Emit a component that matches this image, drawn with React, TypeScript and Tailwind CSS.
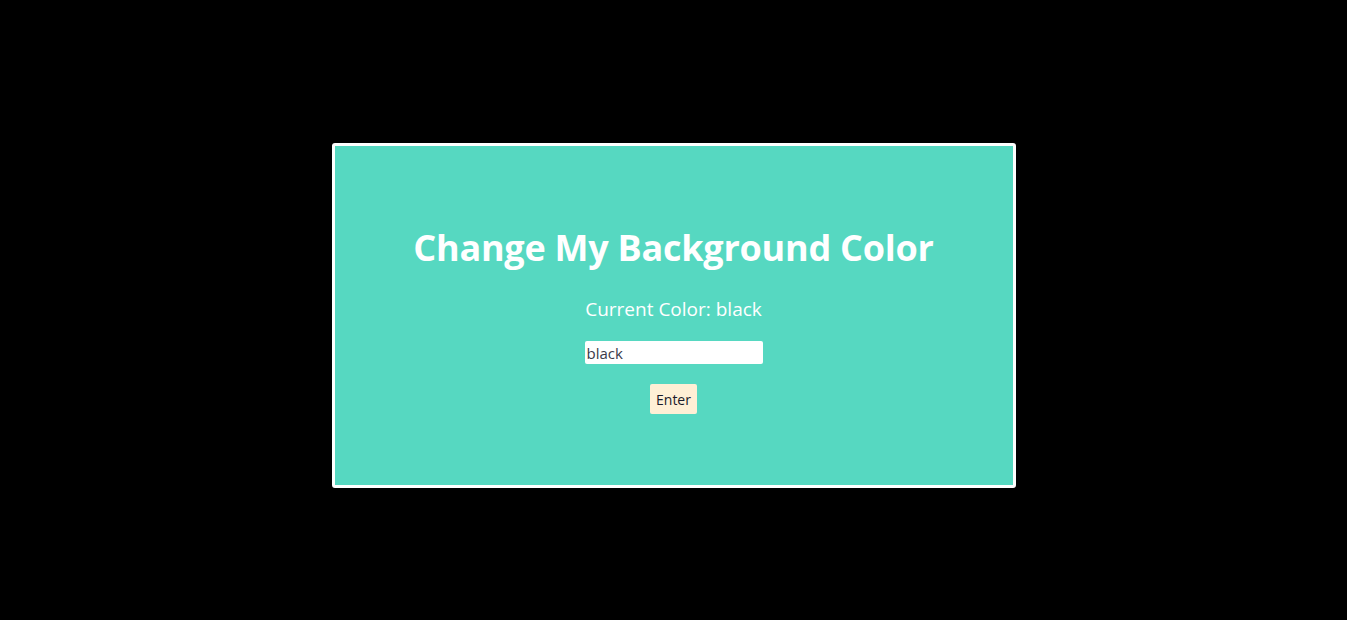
import { useState } from "react";

export default function App() {
  const [color, setColor] = useState("black");
  const [value, setValue] = useState("black");

  return (
    <div
      className="flex h-[620px] w-full items-center justify-center pt-[11px]"
      style={{ backgroundColor: color }}
    >
      <div className="flex h-[345px] w-[684px] flex-col items-center rounded-[3px] border-[3px] border-white bg-[#56d8c1] pt-[76px] font-['Open_Sans',sans-serif] text-white">
        <h1 className="text-[36px] leading-[52px] font-bold tracking-[-0.25px]">Change My Background Color</h1>
        <p className="mt-[23px] text-[19px] leading-[24px]">Current Color: {color}</p>
        <input
          className="mt-[20px] h-[23px] w-[178px] rounded-[2px] bg-white px-[2px] text-[15px] text-[#3a3a4a] outline-none"
          value={value}
          onChange={(e) => setValue(e.target.value)}
        />
        <button
          className="mt-[20px] h-[30px] w-[47px] rounded-[2px] bg-[#ffefd5] text-[14px] text-[#1a1a2a]"
          onClick={() => setColor(value)}
        >
          Enter
        </button>
      </div>
    </div>
  );
}
